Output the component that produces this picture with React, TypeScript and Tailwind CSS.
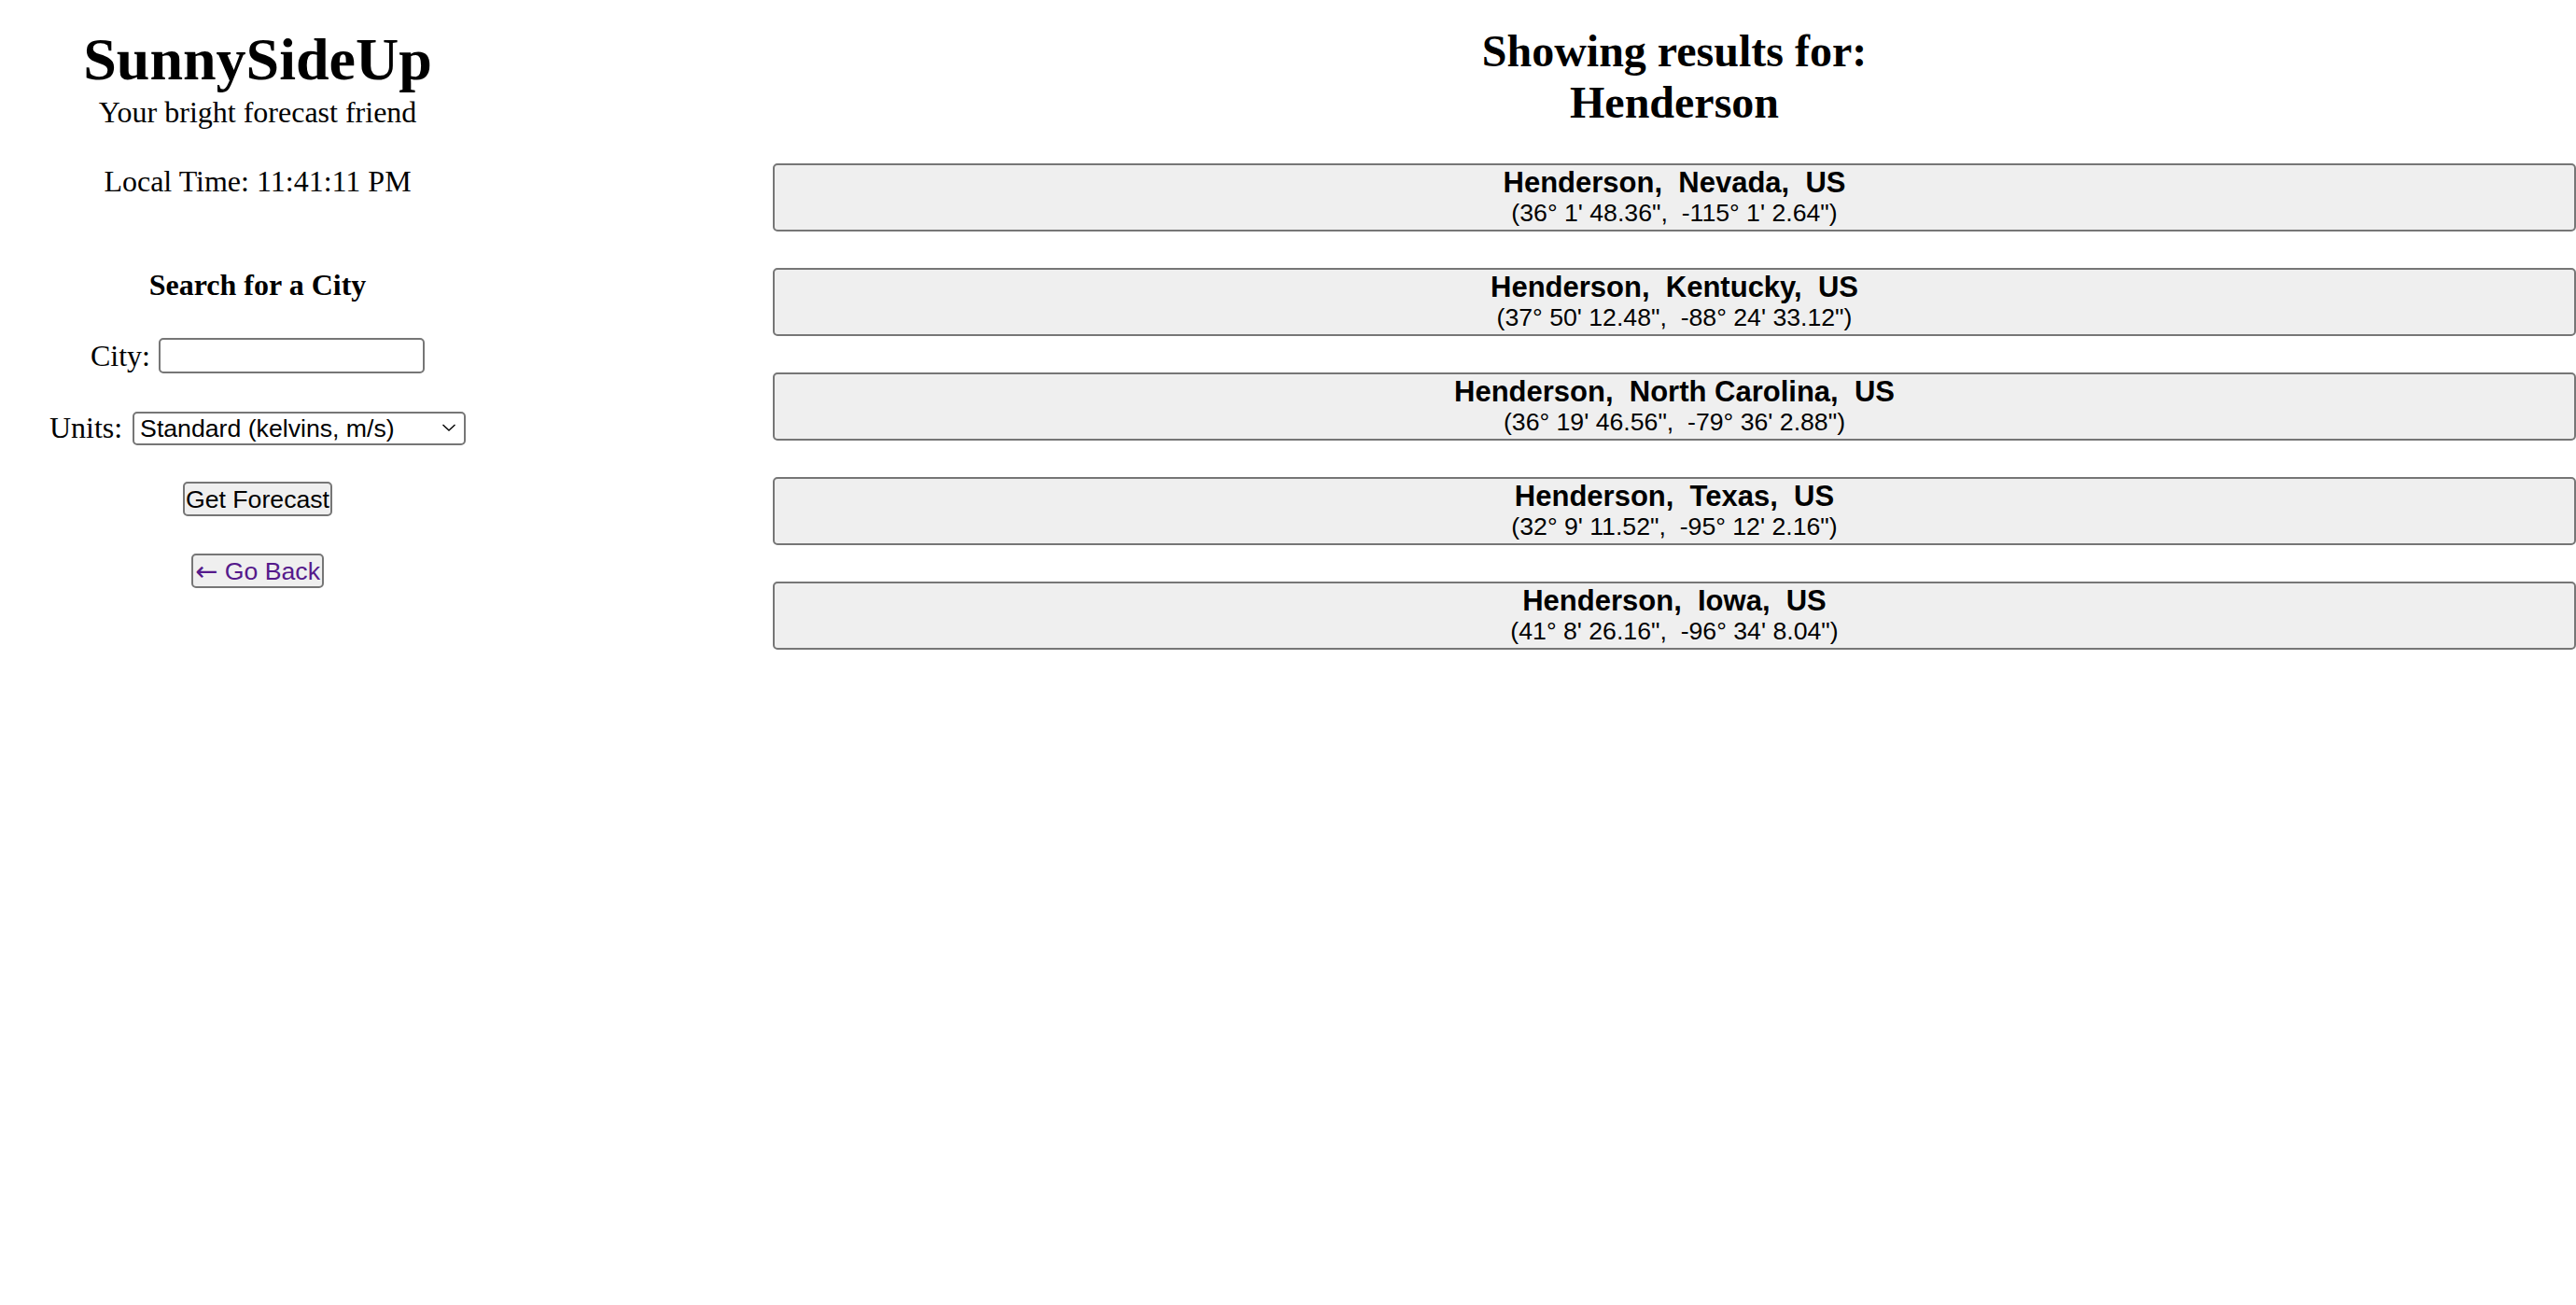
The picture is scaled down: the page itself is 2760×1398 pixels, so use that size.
import React from "react";

const results: [string, string][] = [
  ["Henderson,  Nevada,  US", `(36° 1' 48.36",  -115° 1' 2.64")`],
  ["Henderson,  Kentucky,  US", `(37° 50' 12.48",  -88° 24' 33.12")`],
  ["Henderson,  North Carolina,  US", `(36° 19' 46.56",  -79° 36' 2.88")`],
  ["Henderson,  Texas,  US", `(32° 9' 11.52",  -95° 12' 2.16")`],
  ["Henderson,  Iowa,  US", `(41° 8' 26.16",  -96° 34' 8.04")`],
];

function Chevron() {
  return (
    <svg width="16" height="10" viewBox="0 0 16 10" className="absolute right-[10px] top-1/2 -translate-y-1/2 pointer-events-none">
      <path d="M1.5 2 L8 8 L14.5 2" fill="none" stroke="#000" strokeWidth="1.4" />
    </svg>
  );
}

export default function App() {
  return (
    <div className="flex w-full min-h-screen bg-white text-black">
      <aside className="w-[20%] flex flex-col items-center text-center font-['Liberation_Serif','Times_New_Roman',serif]">
        <h1 className="mt-[27px] text-[64px] leading-[74px] font-bold">SunnySideUp</h1>
        <p className="mt-[1px] text-[32px] leading-[37px]">Your bright forecast friend</p>
        <p className="mt-[37px] text-[32px] leading-[37px]">Local Time: 11:41:11 PM</p>
        <h4 className="mt-[74px] text-[32px] leading-[37px] font-bold">Search for a City</h4>
        <div className="mt-[37px] flex h-[40px] items-center text-[32px] leading-[37px]">
          <label>City:</label>
          <input
            type="text"
            className="ml-[9px] h-[38px] w-[285px] rounded-[5px] border-2 border-[#767676] bg-white px-[4px] text-[26.67px] font-['Liberation_Sans',Arial,sans-serif] outline-none"
          />
        </div>
        <div className="mt-[37px] flex h-[40px] items-center text-[32px] leading-[37px]">
          <label>Units:</label>
          <div className="relative ml-[11px]">
            <select className="h-[36px] w-[357px] appearance-none rounded-[5px] border-2 border-[#767676] bg-white pl-[6px] pr-[30px] text-left text-[26.67px] leading-[30px] font-['Liberation_Sans',Arial,sans-serif] text-black outline-none">
              <option>Standard (kelvins, m/s)</option>
              <option>Metric (°C, m/s)</option>
              <option>Imperial (°F, mph)</option>
            </select>
            <Chevron />
          </div>
        </div>
        <button className="mt-[38px] h-[37px] rounded-[5px] border-2 border-[#767676] bg-[#efefef] px-[1px] text-[26.67px] leading-[30px] font-['Liberation_Sans',Arial,sans-serif] text-black">
          Get Forecast
        </button>
        <button className="mt-[40px] flex h-[37px] items-center rounded-[5px] border-2 border-[#767676] bg-[#efefef] px-[2px] text-[26.67px] leading-[30px] font-['Liberation_Sans',Arial,sans-serif] text-[#551a8b]">
          <span className="font-['DejaVu_Sans',sans-serif] text-[29px] leading-[30px]">←</span>
          <span>&nbsp;Go Back</span>
        </button>
      </aside>
      <div className="w-[10%]" />
      <main className="w-[70%] flex flex-col">
        <h2 className="mt-[27px] text-center text-[48px] leading-[55px] font-bold font-['Liberation_Serif','Times_New_Roman',serif]">
          Showing results for:
          <br />
          Henderson
        </h2>
        {results.map(([name, coords], i) => (
          <button
            key={name}
            className={`${i === 0 ? "mt-[38px]" : "mt-[39px]"} w-full rounded-[5px] border-2 border-[#767676] bg-[#efefef] py-[2px] text-center font-['Liberation_Sans',Arial,sans-serif] text-black`}
          >
            <div className="whitespace-pre text-[31px] leading-[34px] font-bold">{name}</div>
            <div className="whitespace-pre text-[26.67px] leading-[31px]">{coords}</div>
          </button>
        ))}
      </main>
    </div>
  );
}
